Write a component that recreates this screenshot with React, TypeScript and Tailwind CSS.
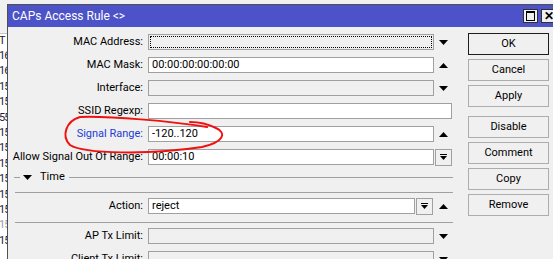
import type { ReactNode } from 'react';

const leftRows = ['16', '16', '15', '15', '55', '15', '15', '15', '15', '15', '15', '15', '15'];

function DownArrow() {
  return (
    <svg width="9" height="5" viewBox="0 0 9 5">
      <polygon points="0,0 9,0 4.5,5" fill="#000" />
    </svg>
  );
}

function UpArrow() {
  return (
    <svg width="9" height="5" viewBox="0 0 9 5">
      <polygon points="0,5 9,5 4.5,0" fill="#000" />
    </svg>
  );
}

function DropBox() {
  return (
    <div className="ml-[1px] flex h-[17px] w-[17px] shrink-0 items-center justify-center border border-[#a0a0a0] bg-[#f0f0f0]">
      <svg width="7" height="7" viewBox="0 0 7 7">
        <rect x="0" y="0" width="7" height="1" fill="#000" />
        <polygon points="0,2 7,2 3.5,6" fill="#000" />
      </svg>
    </div>
  );
}

function Row({ label, blue, children }: { label: string; blue?: boolean; children: ReactNode }) {
  return (
    <div className="flex h-[16px] shrink-0 items-center">
      <div className={`w-[135px] whitespace-nowrap text-right ${blue ? 'text-[#1f3bd6]' : 'text-black'}`}>
        {label}
      </div>
      <div className="ml-[5px] flex h-[16px] w-[305px] items-center">{children}</div>
    </div>
  );
}

function Field({ value, disabled, w = 'w-[286px]' }: { value?: string; disabled?: boolean; w?: string }) {
  return (
    <div
      className={`flex h-[16px] shrink-0 items-center border border-[#a0a0a0] px-[3px] leading-[14px] ${w} ${
        disabled ? 'bg-[#f0f0f0]' : 'bg-white'
      }`}
    >
      {value}
    </div>
  );
}

function ArrowCell({ up }: { up?: boolean }) {
  return <div className="flex w-[20px] items-center justify-center">{up ? <UpArrow /> : <DownArrow />}</div>;
}

function Btn({ label, primary, className = '' }: { label: string; primary?: boolean; className?: string }) {
  return (
    <div
      className={`flex h-[22px] shrink-0 items-center justify-center border bg-[#f0f0f0] ${
        primary ? 'border-[#1e1e1e]' : 'border-[#adadad]'
      } ${className}`}
    >
      {label}
    </div>
  );
}

export default function App() {
  return (
    <div
      className="relative flex h-[259px] w-[553px] overflow-hidden bg-[#f0f0f0] text-[11px] text-black"
      style={{ fontFamily: 'Roboto, "Liberation Sans", sans-serif' }}
    >
      {/* table of the window behind */}
      <div className="w-[7px] shrink-0 overflow-hidden pt-[33px]">
        <div className="flex h-[226px] w-[20px] flex-col border-t border-[#c8c8c8] bg-white">
          <div className="ml-[-1px] h-[14px] shrink-0 whitespace-nowrap leading-[14px] text-[#202020]">T</div>
          {leftRows.map((n, i) => (
            <div
              key={i}
              className={`ml-[-1px] h-[15.4px] shrink-0 whitespace-nowrap leading-[15px] tracking-[-1px] ${
                i === leftRows.length - 2 ? 'text-[#9a9aa8]' : 'text-[#1c1c40]'
              }`}
            >
              {n}
            </div>
          ))}
        </div>
      </div>

      {/* dialog */}
      <div className="mt-[4px] flex w-[560px] shrink-0 flex-col border-l border-t border-[#505050]">
        <div className="flex h-[22px] shrink-0 items-center bg-[#4c52c8] pl-[4px] pr-[11px] text-white">
          <span className="text-[12px]">CAPs Access Rule &lt;&gt;</span>
          <div className="ml-auto flex items-center gap-[3px]">
            <div className="flex h-[14px] w-[15px] items-center justify-center border border-[#303030] bg-[#f0f0f0]">
              <div className="h-[10px] w-[9px] border border-t-2 border-black" />
            </div>
            <div className="flex h-[14px] w-[15px] items-center justify-center border border-[#303030] bg-[#f0f0f0] text-[12px] font-bold leading-none text-black">
              ✕
            </div>
          </div>
        </div>

        <div className="flex shrink-0">
          <div className="flex w-[445px] flex-col pt-[7px]">
            <div className="flex flex-col gap-[7px]">
              <Row label="MAC Address:">
                <div className="flex h-[16px] w-[286px] shrink-0 border border-[#a0a0a0] bg-[#f0f0f0] p-[1px]">
                  <div className="flex-1 border border-dotted border-black" />
                </div>
                <ArrowCell />
              </Row>
              <Row label="MAC Mask:">
                <Field value="00:00:00:00:00:00" />
                <ArrowCell up />
              </Row>
              <Row label="Interface:">
                <Field disabled />
                <ArrowCell />
              </Row>
              <Row label="SSID Regexp:">
                <Field w="w-[304px]" />
              </Row>
              <Row label="Signal Range:" blue>
                <Field value="-120..120" />
                <ArrowCell up />
              </Row>
              <Row label="Allow Signal Out Of Range:">
                <Field value="00:00:10" />
                <DropBox />
              </Row>
            </div>

            <div className="mt-[5px] flex h-[14px] shrink-0 items-center pl-[6px]">
              <div className="h-px w-[6px] bg-[#a0a0a0]" />
              <div className="ml-[3px]">
                <DownArrow />
              </div>
              <span className="ml-[8px]">Time</span>
              <div className="ml-[4px] h-px flex-1 bg-[#a0a0a0]" />
            </div>

            <div className="ml-[7px] mt-[8px] h-px shrink-0 bg-[#a0a0a0]" />

            <div className="mt-[5px]">
              <Row label="Action:">
                <Field value="reject" w="w-[267px]" />
                <DropBox />
                <ArrowCell up />
              </Row>
            </div>

            <div className="ml-[7px] mt-[8px] h-px shrink-0 bg-[#a0a0a0]" />

            <div className="mt-[5px] flex flex-col gap-[7px]">
              <Row label="AP Tx Limit:">
                <Field disabled />
                <ArrowCell />
              </Row>
              <Row label="Client Tx Limit:">
                <Field disabled />
                <ArrowCell />
              </Row>
            </div>
          </div>

          <div className="ml-[15px] flex w-[81px] flex-col gap-[4px] pt-[6px]">
            <Btn label="OK" primary />
            <Btn label="Cancel" />
            <Btn label="Apply" />
            <Btn label="Disable" className="mt-[5px]" />
            <Btn label="Comment" />
            <Btn label="Copy" />
            <Btn label="Remove" />
          </div>
        </div>
      </div>

      {/* hand drawn annotation */}
      <svg className="pointer-events-none absolute left-0 top-0" width="553" height="259" viewBox="0 0 553 259">
        <path
          d="M 207 127 C 170 121, 110 116, 80 117 C 66 121, 61 136, 70 145 C 84 154, 150 155, 202 147 C 224 142, 227 133, 216 128 C 208 124, 200 122, 190 122"
          fill="none"
          stroke="#f01010"
          strokeWidth="2"
          strokeLinecap="round"
        />
      </svg>
    </div>
  );
}
